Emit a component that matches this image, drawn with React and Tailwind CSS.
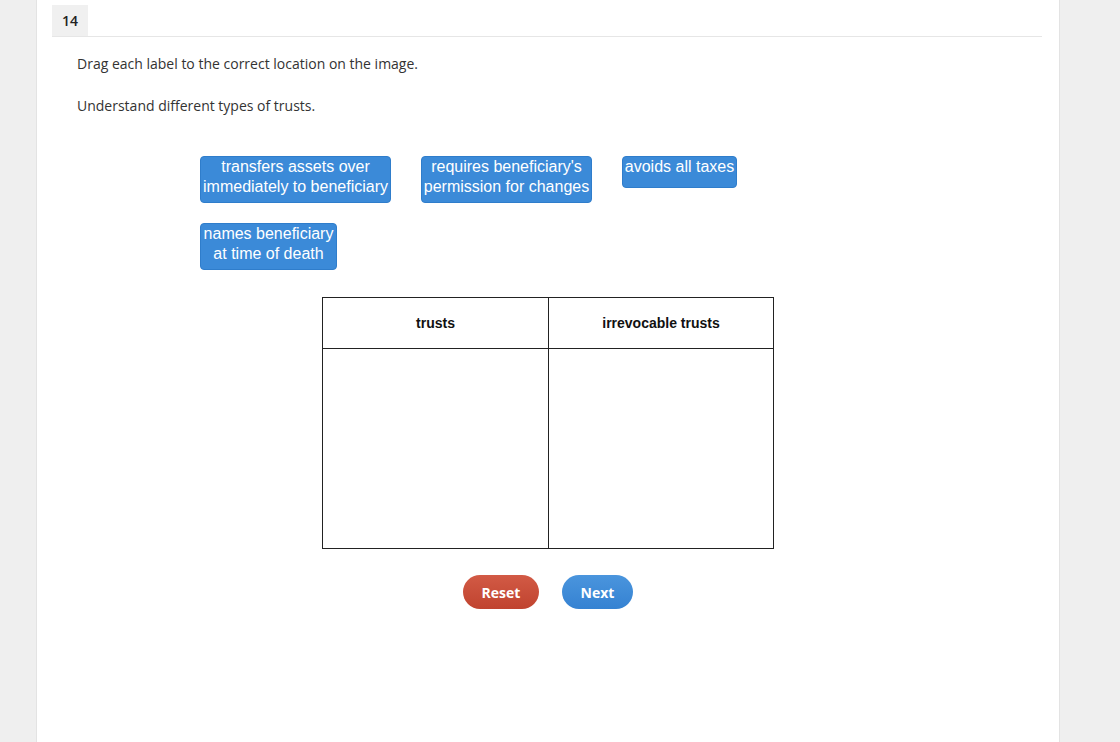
import React from "react";

const labels = [
  { text: ["transfers assets over", "immediately to beneficiary"], w: "w-[191px]", h: "h-[47px]" },
  { text: ["requires beneficiary's", "permission for changes"], w: "w-[171px]", h: "h-[47px]" },
  { text: ["avoids all taxes"], w: "w-[115px]", h: "h-[32px]" },
  { text: ["names beneficiary", "at time of death"], w: "w-[137px]", h: "h-[47px]" },
];

function Label({ item }) {
  return (
    <div
      className={`${item.w} ${item.h} bg-[#3b8ad8] border border-[#2f7dcb] rounded-[4px] text-white text-[16px] leading-[20px] text-center font-['Liberation_Sans',Arial,sans-serif]`}
    >
      {item.text.map((line) => (
        <div key={line} className="whitespace-nowrap">
          {line}
        </div>
      ))}
    </div>
  );
}

export default function App() {
  return (
    <div className="min-h-screen bg-[#efefef] font-['Open_Sans',sans-serif] text-[#333]">
      <div className="ml-[36px] w-[1024px] min-h-[742px] bg-white border-x border-[#e3e3e3] px-[15px]">
        {/* question number */}
        <div className="pt-[5px] mr-[2px] border-b border-[#e6e6e6]">
          <div className="w-[36px] h-[31px] bg-[#f0f0f0] flex items-center justify-center text-[14px] font-semibold text-[#222]">
            14
          </div>
        </div>

        <div className="pl-[25px]">
          <p className="mt-[17px] text-[14px] leading-[20px]">
            Drag each label to the correct location on the image.
          </p>
          <p className="mt-[22px] text-[14px] leading-[20px]">
            Understand different types of trusts.
          </p>

          {/* draggable labels */}
          <div className="ml-[123px] mt-[40px] w-[600px] flex flex-wrap items-start gap-x-[30px] gap-y-[20px]">
            {labels.map((item) => (
              <Label key={item.text[0]} item={item} />
            ))}
          </div>

          {/* drop table */}
          <div className="ml-[245px] mt-[27px] w-[452px]">
            <div className="border border-[#222] grid grid-cols-[226px_1fr] font-['Liberation_Sans',Arial,sans-serif]">
              <div className="h-[51px] flex items-center justify-center text-[14px] font-bold text-[#111] border-r border-b border-[#222]">
                trusts
              </div>
              <div className="h-[51px] flex items-center justify-center text-[14px] font-bold text-[#111] border-b border-[#222]">
                irrevocable trusts
              </div>
              <div className="h-[199px] border-r border-[#222]"></div>
              <div className="h-[199px]"></div>
            </div>

            <div className="mt-[26px] flex justify-center gap-[23px]">
              <button className="w-[76px] h-[34px] rounded-full bg-gradient-to-b from-[#d25a45] to-[#c0432f] text-white text-[14px] font-bold">
                Reset
              </button>
              <button className="w-[71px] h-[34px] rounded-full bg-gradient-to-b from-[#4a95dd] to-[#3582d2] text-white text-[14px] font-bold">
                Next
              </button>
            </div>
          </div>
        </div>
      </div>
    </div>
  );
}
